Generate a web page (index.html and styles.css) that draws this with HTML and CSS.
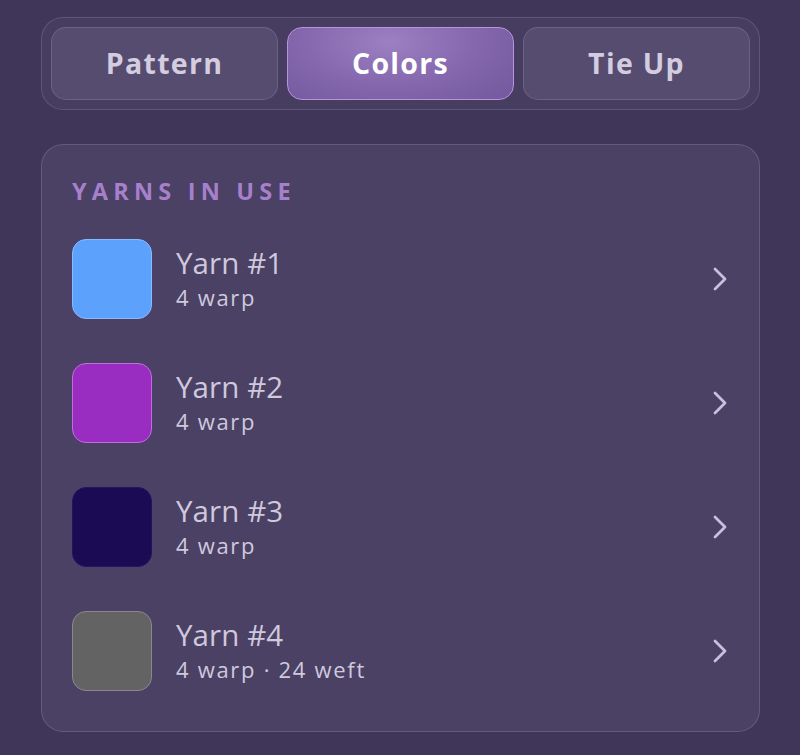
FILE: index.html
```html
<!DOCTYPE html>
<html lang="en">
<head>
<meta charset="utf-8">
<title>Yarns</title>
<link rel="stylesheet" href="styles.css">
</head>
<body>
<div class="page">
  <nav class="tabs">
    <button class="tab">Pattern</button>
    <button class="tab active">Colors</button>
    <button class="tab">Tie Up</button>
  </nav>
  <section class="card">
    <h2 class="heading">YARNS IN USE</h2>
    <ul class="list">
      <li class="row">
        <span class="swatch sw1"></span>
        <div class="info"><div class="title">Yarn #1</div><div class="sub">4 warp</div></div>
        <svg class="chev" viewBox="0 0 16 26"><path d="M3 3 L13 13 L3 23"/></svg>
      </li>
      <li class="row">
        <span class="swatch sw2"></span>
        <div class="info"><div class="title">Yarn #2</div><div class="sub">4 warp</div></div>
        <svg class="chev" viewBox="0 0 16 26"><path d="M3 3 L13 13 L3 23"/></svg>
      </li>
      <li class="row">
        <span class="swatch sw3"></span>
        <div class="info"><div class="title">Yarn #3</div><div class="sub">4 warp</div></div>
        <svg class="chev" viewBox="0 0 16 26"><path d="M3 3 L13 13 L3 23"/></svg>
      </li>
      <li class="row">
        <span class="swatch sw4"></span>
        <div class="info"><div class="title">Yarn #4</div><div class="sub">4 warp · 24 weft</div></div>
        <svg class="chev" viewBox="0 0 16 26"><path d="M3 3 L13 13 L3 23"/></svg>
      </li>
    </ul>
  </section>
</div>
</body>
</html>
```

FILE: styles.css
```css
* { box-sizing: border-box; }
html, body { margin: 0; padding: 0; }
body {
  background: #3f3659;
  font-family: "Open Sans", "Noto Sans", sans-serif;
  width: 800px;
  height: 755px;
  overflow: hidden;
}
.page {
  padding: 17px 40px 0 41px;
  display: flex;
  flex-direction: column;
  gap: 34px;
}
.tabs {
  display: grid;
  grid-template-columns: 1fr 1fr 1fr;
  gap: 9px;
  padding: 9px;
  height: 93px;
  border-radius: 22px;
  background: #463d61;
  border: 1px solid rgba(255,255,255,0.13);
}
.tab {
  font-family: inherit;
  font-size: 28.5px;
  font-weight: 700;
  letter-spacing: 1.3px;
  color: #d4cde0;
  background: #554c70;
  border: 1.5px solid rgba(255,255,255,0.13);
  border-radius: 15px;
  padding: 0 0 2px;
}
.tab.active {
  color: #ffffff;
  background: radial-gradient(ellipse 70% 110% at 45% 20%, #9c80c2 0%, #8467ad 55%, #755a9f 100%);
  border: 1.5px solid #b894e0;
}
.card {
  background: #4a4165;
  border: 1px solid rgba(255,255,255,0.14);
  border-radius: 22px;
  padding: 31px 31px 41px 30px;
  height: 588px;
}
.heading {
  margin: 0;
  font-size: 23.5px;
  line-height: 30px;
  font-weight: 700;
  letter-spacing: 5.2px;
  color: #a780cc;
}
.list {
  list-style: none;
  margin: 33px 0 0;
  padding: 0;
  display: flex;
  flex-direction: column;
  gap: 44px;
}
.row {
  display: flex;
  align-items: center;
  height: 80px;
}
.swatch {
  width: 80px;
  height: 80px;
  border-radius: 14px;
  flex: none;
  border: 1.5px solid transparent;
}
.sw1 { background: #5ca2fd; border-color: #89b9ff; }
.sw2 { background: #9a2dc1; border-color: #c36cdb; }
.sw3 { background: #1b0b55; border-color: #241463; }
.sw4 { background: #636363; border-color: #8b8791; }
.info {
  flex: 1;
  margin-left: 24px;
  display: flex;
  flex-direction: column;
  padding-bottom: 1px;
}
.title {
  font-size: 29.5px;
  line-height: 35px;
  letter-spacing: 0.1px;
  color: #d0c9dd;
  font-weight: 400;
}
.sub {
  font-size: 22px;
  line-height: 30px;
  margin-top: 2px;
  letter-spacing: 1.7px;
  color: #d0c9dd;
}
.chev {
  width: 16px;
  height: 26px;
  flex: none;
  fill: none;
  stroke: #c9c0dc;
  stroke-width: 2.8;
  stroke-linecap: round;
  stroke-linejoin: round;
}
```
